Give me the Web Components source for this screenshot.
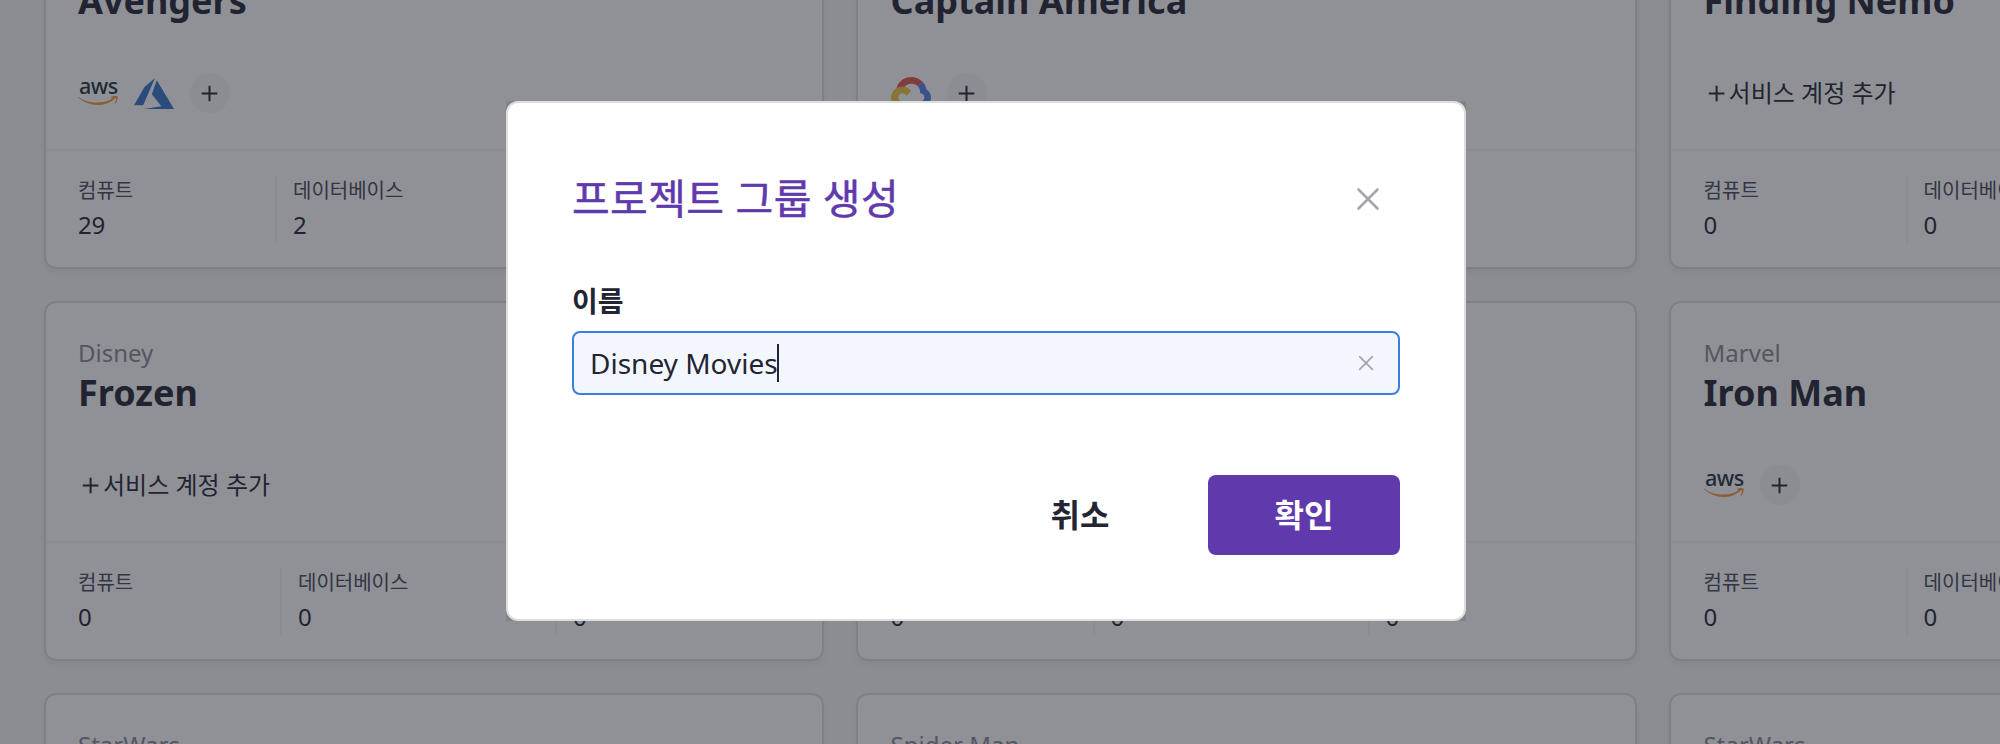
<!DOCTYPE html>
<html lang="ko">
<head>
<meta charset="utf-8">
<title>프로젝트</title>
<style>
html, body { margin: 0; height: 100%; overflow: hidden; }
body { font-family: "Noto Sans", "Noto Sans CJK KR", sans-serif; color: #232533; background: #f7f7f8; }
</style>
</head>
<body>
<project-board>
  <project-card name="Avengers" style="--first: 197px">
    <provider-icon kind="aws" slot="accounts"></provider-icon>
    <provider-icon kind="azure" slot="accounts"></provider-icon>
    <provider-icon kind="add" slot="accounts"></provider-icon>
    <stat-item slot="stats" label="컴퓨트" value="29"></stat-item>
    <stat-item slot="stats" label="데이터베이스" value="2"></stat-item>
  </project-card>
  <project-card name="Captain America">
    <provider-icon kind="google" slot="accounts"></provider-icon>
    <provider-icon kind="add" slot="accounts"></provider-icon>
  </project-card>
  <project-card name="Finding Nemo">
    <add-account slot="accounts">서비스 계정 추가</add-account>
    <stat-item slot="stats" label="컴퓨트" value="0"></stat-item>
    <stat-item slot="stats" label="데이터베이스" value="0"></stat-item>
  </project-card>
  <project-card group="Disney" name="Frozen">
    <add-account slot="accounts">서비스 계정 추가</add-account>
    <stat-item slot="stats" label="컴퓨트" value="0"></stat-item>
    <stat-item slot="stats" label="데이터베이스" value="0"></stat-item>
    <stat-item slot="stats" value="0"></stat-item>
  </project-card>
  <project-card>
    <stat-item slot="stats" value="0"></stat-item>
    <stat-item slot="stats" value="0"></stat-item>
    <stat-item slot="stats" value="0"></stat-item>
  </project-card>
  <project-card group="Marvel" name="Iron Man">
    <provider-icon kind="aws" slot="accounts"></provider-icon>
    <provider-icon kind="add" slot="accounts"></provider-icon>
    <stat-item slot="stats" label="컴퓨트" value="0"></stat-item>
    <stat-item slot="stats" label="데이터베이스" value="0"></stat-item>
  </project-card>
  <project-card group="StarWars"></project-card>
  <project-card group="Spider Man"></project-card>
  <project-card group="StarWars"></project-card>
</project-board>

<modal-dialog heading="프로젝트 그룹 생성">
  <text-field label="이름" value="Disney Movies"></text-field>
  <action-button slot="actions">취소</action-button>
  <action-button slot="actions" primary>확인</action-button>
</modal-dialog>

<script>
const define = (name, render) => customElements.define(name, class extends HTMLElement {
  constructor() {
    super();
    this.attachShadow({ mode: 'open' });
  }
  connectedCallback() {
    this.shadowRoot.innerHTML = render(k => this.getAttribute(k) || '');
  }
});

define('project-board', () => `
<style>
:host { display: grid; grid-template-columns: 780px 781px 781px; grid-auto-rows: 360px; gap: 32px;
  width: 2406px; margin: -91px 0 0 44px; height: 835px; }
::slotted(:not(:nth-child(3n+1))) { --pad: 32.6px; }
</style><slot></slot>`);

define('project-card', a => `
<style>
:host { display: flex; flex-direction: column; box-sizing: border-box; background: #fff; border: 2px solid #dddddf;
  border-radius: 12px; box-shadow: 0 4px 8px rgba(0,0,0,.06); overflow: hidden; }
.group { height: 30px; margin-top: 35px; padding: 0 var(--pad, 32px); font-size: 24px; line-height: 30px; color: #898995; }
.name { height: 44px; margin-top: 3px; padding: 0 var(--pad, 32px); font-size: 36px; line-height: 44px; font-weight: 700; }
.accounts { display: flex; gap: 16px; height: 40px; margin-top: 50px; padding: 0 var(--pad, 32px) 36px; }
.stats { display: grid; grid-template-columns: var(--first, 202px) 275px 1fr; height: 68px; padding: 24px var(--pad, 32px); border-top: 2px solid #f5f5f6; }
::slotted(stat-item:not(:first-of-type)) { border-left: 2px solid #f5f5f6; padding-left: 16px; }
</style>
<div class="group">${a('group')}</div>
<div class="name">${a('name')}</div>
<div class="accounts"><slot name="accounts"></slot></div>
<div class="stats"><slot name="stats"></slot></div>`);

define('stat-item', a => `
<style>
:host { display: block; height: 68px; box-sizing: border-box; }
.label { height: 28px; padding-top: 2px; font-size: 20px; line-height: 28px; color: #454658; }
.value { margin-top: 4px; height: 32px; font-size: 24px; line-height: 32px; letter-spacing: -.3px; }
</style>
<div class="label">${a('label')}</div><div class="value">${a('value')}</div>`);

define('add-account', () => `
<style>
:host { display: flex; align-items: center; height: 40px; font-size: 24px; line-height: 40px; white-space: nowrap; }
svg { display: block; width: 25px; height: 40px; flex: none; }
</style>
<svg viewBox="0 0 25 40" fill="none" stroke="#232533" stroke-width="2"><path d="M4.800 20.500h15.600M12.600 12.700v15.600"/></svg><slot></slot>`);

const icons = {
  aws: `<div class="word">aws</div><svg viewBox="0 0 40 40" fill="#f39c38">
    <path d="M.4 23.800C6 28.200 12.600 29.600 19.500 29.600c5 0 11.300-1.500 16-4.900.8-.5 1.500.5.7 1.200C31.900 29.800 25.700 32 19.500 32 12.100 32 5.400 29 .1 24.500c-.4-.4-.1-.9.300-.7z"/>
    <path d="M33.200 24.100c2-1.400 5.500-1.100 6.200-.6.8.7-.2 5.500-2.200 7.300-.4.300-.7.200-.5-.2.6-1.500 1.600-4.400 1.200-5-.5-.7-3.100-.4-4.400-.2-.5 0-.6-.3-.3-.6z"/></svg>`,
  azure: `<svg viewBox="0 0 40 40" fill="#3375c6"><path d="M21 5 10.500 14 0 32.300h9.200zM22.800 7.200l-5 14.100 9.600 12L10 35.900h30z"/></svg>`,
  google: `<svg viewBox="0 0 40 40">
    <path fill="#e2544f" d="M5.500 15.300C7.200 8.300 13.700 4 20 4c4.500 0 8.500 1.600 11.500 4.700L26.500 13c-1.900-1.800-4.200-2.200-6.500-2.200-3 0-5.900 1.700-7.100 4.100z"/>
    <path fill="#5380e6" d="m31.500 8.700-5 4.300c2 1.800 2.700 4 2.700 7.300 2.400 0 4.200 1.900 4.200 4.200s-1.800 4.200-4.200 4.200H20v7.200h9.200C35.100 35.900 40 30.900 40 24.600c0-3.300-1.600-6.400-4.500-8.200-.6-3-1.900-5.500-4-7.700z"/>
    <path fill="#4cae66" d="M20 28.700h-8.400c-.6 0-1.200-.2-1.800-.4l-5 5c2 1.600 4.200 2.500 6.800 2.500H20z"/>
    <path fill="#f5c244" d="M11.300 13.500C5 13.500 0 18.500 0 24.600c0 3.500 1.700 6.700 4.700 8.700l5.100-5c-1.500-.7-2.500-2.100-2.500-3.800 0-2.300 1.900-4.200 4.200-4.200 1.700 0 3.200 1 3.800 2.600l4.900-4.900c-2.100-2.800-5.300-4.500-8.900-4.500z"/></svg>`,
  add: `<svg viewBox="0 0 40 40"><circle cx="20" cy="20" r="20" fill="#f7f7f7"/><path d="M11.700 20.400h15.600M19.500 12.700v15.500" stroke="#232533" stroke-width="2"/></svg>`
};
define('provider-icon', a => `
<style>
:host { display: block; position: relative; width: 40px; height: 40px; flex: none; }
svg { display: block; width: 40px; height: 40px; }
.word { position: absolute; left: 1px; top: -2px; font-size: 22.5px; line-height: 30px; font-weight: 500; letter-spacing: -.6px; color: #252f3e; transform: scaleX(.96); transform-origin: 0 0; }
</style>${icons[a('kind')]}`);

define('modal-dialog', a => `
<style>
:host { position: fixed; inset: 0; display: flex; justify-content: center; align-items: flex-start; background: rgba(32,35,46,.5); box-sizing: border-box; padding-right: 28px; padding-top: 101px; }
.edge { width: 960px; height: 520px; background: rgba(33,34,44,.12); }
.box { box-sizing: border-box; width: 960px; height: 520px; padding: 64px; background: #fff; border: 2px solid #ddd; border-radius: 12px; }
header { display: flex; justify-content: space-between; align-items: center; height: 64px; margin-bottom: 50px; }
h2 { margin: 0 0 2px; font-size: 41px; line-height: 62px; font-weight: 400; color: #6039ad; -webkit-text-stroke: .5px #6039ad; letter-spacing: .4px; }
header svg { display: block; width: 64px; height: 64px; }
footer { display: flex; justify-content: flex-end; gap: 32px; margin-top: 80px; }
</style>
<div class="edge"><div class="box">
<header><h2>${a('heading')}</h2>
<svg viewBox="0 0 64 64" stroke="#a5a5ae" stroke-width="2.600" stroke-linecap="round"><path d="m22.500 22.500 19 19m0-19-19 19"/></svg></header>
<slot></slot>
<footer><slot name="actions"></slot></footer>
</div></div>`);

define('text-field', a => `
<style>
:host { display: block; }
label { display: block; height: 40px; margin-bottom: 10px; font-size: 28px; line-height: 40px; font-weight: 700; }
.input { display: flex; align-items: center; box-sizing: border-box; height: 64px; padding: 0 24px 0 16px; border: 2px solid #3a7ee0; border-radius: 8px; background: #f3f7fd; font-size: 28px; line-height: 60px; }
.caret { width: 2px; height: 38px; margin-left: -1px; background: #232533; }
svg { display: block; width: 16px; height: 16px; margin-left: auto; }
</style>
<label>${a('label')}</label>
<div class="input"><span>${a('value')}</span><i class="caret"></i>
<svg viewBox="0 0 16 16" stroke="#a5a5ae" stroke-width="1.800" stroke-linecap="round"><path d="m1.700 1.700 12.600 12.600m0-12.600L1.700 14.300"/></svg></div>`);

define('action-button', () => `
<style>
:host { display: block; width: 192px; height: 80px; border-radius: 8px; text-align: center; font-size: 32px; line-height: 79px; font-weight: 700; }
:host([primary]) { background: #6039ad; color: #fff; }
</style><slot></slot>`);
</script>
</body>
</html>
